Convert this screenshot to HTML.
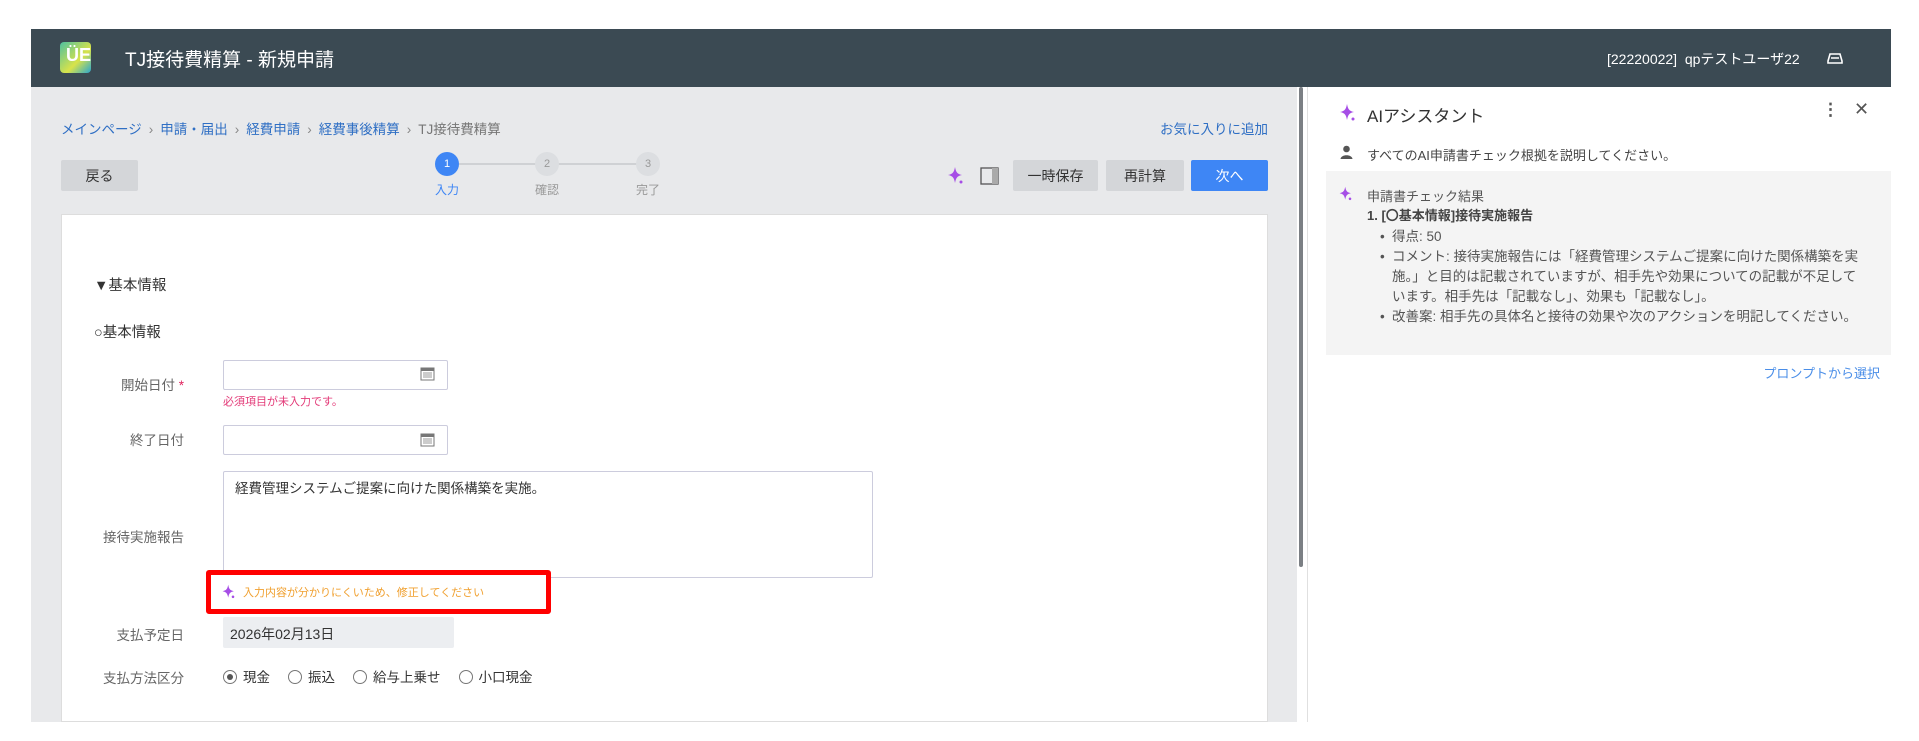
<!DOCTYPE html>
<html><head><meta charset="utf-8">
<style>
*{box-sizing:border-box;margin:0;padding:0}
body{width:1919px;height:741px;background:#fff;position:relative;overflow:hidden;font-family:"Liberation Sans","Noto Sans CJK JP",sans-serif;color:#333;font-size:13.5px}
.a{position:absolute;white-space:nowrap}
.hdr{left:31px;top:29px;width:1860px;height:58px;background:#3b4a53}
.main{left:31px;top:87px;width:1266px;height:635px;background:#e8e9eb}
.card{left:61px;top:214px;width:1207px;height:508px;background:#fff;border:1px solid #ddd}
.btn{height:31px;background:#d4d6d9;border-radius:2px;font-size:14px;color:#333;display:flex;align-items:center;justify-content:center}
.circ{width:24px;height:24px;border-radius:50%;background:#dcdee1;color:#999;font-size:11px;display:flex;align-items:center;justify-content:center}
.lbl{color:#666;text-align:right;width:140px}
.inp{border:1px solid #ccd;border-radius:2px;background:#fff}
.blue{color:#2f6fc4}
.sep{color:#888;margin:0 7px}
.rad{display:inline-block;width:14px;height:14px;border:1px solid #777;border-radius:50%;vertical-align:-2px;margin-right:6px;position:relative}
.ri{margin-right:18px}
.li{padding-left:12px;position:relative}
.li span{position:absolute;left:0}
</style></head><body>
<div class="a hdr"></div>
<div class="a" style="left:60px;top:42px;width:31px;height:31px;border-radius:4px;background:linear-gradient(135deg,#4fc0a0,#d8e34a 60%,#2aa6d0);"></div>
<div class="a" style="left:66px;top:45px;color:#fff;font-weight:bold;font-size:18px">ÜE</div>
<div class="a" style="left:125px;top:45px;color:#fff;font-size:19px">TJ接待費精算 - 新規申請</div>
<div class="a" style="left:1607px;top:49px;color:#fff;font-size:14px">[22220022]&nbsp; qpテストユーザ22</div>
<svg class="a" style="left:1826px;top:49px" width="18" height="16" viewBox="0 0 18 16"><path d="M2 12 L4 5 H14 L16 12 V14 H2Z M5 9 H13" fill="none" stroke="#fff" stroke-width="1.6"/></svg>

<div class="a main"></div>
<div class="a" style="left:1299px;top:87px;width:4px;height:480px;background:#7b7f84;border-radius:2px"></div>
<div class="a" style="left:61px;top:118px;font-size:13.5px"><span class="blue">メインページ</span><span class="sep">›</span><span class="blue">申請・届出</span><span class="sep">›</span><span class="blue">経費申請</span><span class="sep">›</span><span class="blue">経費事後精算</span><span class="sep">›</span><span style="color:#777">TJ接待費精算</span></div>
<div class="a blue" style="left:1160px;top:118px;width:108px;text-align:right">お気に入りに追加</div>
<div class="a btn" style="left:61px;top:160px;width:77px">戻る</div>
<div class="a" style="left:459px;top:163px;width:200px;height:2px;background:#cfd1d4"></div>
<div class="a circ" style="left:435px;top:152px;background:#3e86f5;color:#fff">1</div>
<div class="a circ" style="left:535px;top:152px">2</div>
<div class="a circ" style="left:636px;top:152px">3</div>
<div class="a" style="left:435px;top:181px;font-size:12px;color:#3e86f5">入力</div>
<div class="a" style="left:535px;top:181px;font-size:12px;color:#999">確認</div>
<div class="a" style="left:636px;top:181px;font-size:12px;color:#999">完了</div>
<svg class="a" style="left:946px;top:166px" width="20" height="20" viewBox="0 0 20 20"><path d="M9 1 C10 6 11 8 16 9 C11 10 10 12 9 17 C8 12 7 10 2 9 C7 8 8 6 9 1Z" fill="#a64de6"/><circle cx="15" cy="16" r="1.5" fill="#a64de6"/></svg>
<svg class="a" style="left:980px;top:167px" width="19" height="18" viewBox="0 0 19 18"><rect x="1" y="1" width="17" height="16" fill="none" stroke="#555" stroke-width="1.3"/><rect x="12" y="1" width="6" height="16" fill="#aaa"/></svg>
<div class="a btn" style="left:1013px;top:160px;width:85px">一時保存</div>
<div class="a btn" style="left:1106px;top:160px;width:78px">再計算</div>
<div class="a btn" style="left:1191px;top:160px;width:77px;background:#3e86f5;color:#fff">次へ</div>

<div class="a card"></div>
<div class="a" style="left:94px;top:274px;font-size:14.5px">▼基本情報</div>
<div class="a" style="left:94px;top:321px;font-size:14.5px">○基本情報</div>
<div class="a lbl" style="left:44px;top:374px">開始日付 <span style="color:#e0245e">*</span></div>
<div class="a inp" style="left:223px;top:360px;width:225px;height:30px"></div>
<div class="a" style="left:223px;top:393px;font-size:11px;color:#e33a78">必須項目が未入力です。</div>
<div class="a lbl" style="left:44px;top:429px">終了日付</div>
<div class="a inp" style="left:223px;top:425px;width:225px;height:30px"></div>
<svg class="a" style="left:420px;top:366px" width="15" height="15" viewBox="0 0 15 15"><rect x="1" y="2" width="13" height="12" fill="none" stroke="#777"/><rect x="1" y="2" width="13" height="3" fill="#777"/><path d="M3 7h9M3 9h9M3 11h9" stroke="#999"/></svg>
<svg class="a" style="left:420px;top:432px" width="15" height="15" viewBox="0 0 15 15"><rect x="1" y="2" width="13" height="12" fill="none" stroke="#777"/><rect x="1" y="2" width="13" height="3" fill="#777"/><path d="M3 7h9M3 9h9M3 11h9" stroke="#999"/></svg>
<div class="a inp" style="left:223px;top:471px;width:650px;height:107px"></div>
<div class="a" style="left:235px;top:477px">経費管理システムご提案に向けた関係構築を実施。</div>
<div class="a lbl" style="left:44px;top:526px">接待実施報告</div>
<div class="a" style="left:206px;top:570px;width:345px;height:44px;border:5px solid #f00;border-radius:3px;background:#fff"></div>
<svg class="a" style="left:221px;top:584px" width="16" height="16" viewBox="0 0 20 20"><path d="M9 1 C10 6 11 8 16 9 C11 10 10 12 9 17 C8 12 7 10 2 9 C7 8 8 6 9 1Z" fill="#a64de6"/><circle cx="15" cy="16" r="1.6" fill="#a64de6"/></svg>
<div class="a" style="left:243px;top:584px;font-size:11px;color:#f0a030">入力内容が分かりにくいため、修正してください</div>
<div class="a lbl" style="left:44px;top:624px">支払予定日</div>
<div class="a" style="left:223px;top:617px;width:231px;height:31px;background:#eceef1;border-radius:2px"></div>
<div class="a" style="left:230px;top:624px;font-size:14px">2026年02月13日</div>
<div class="a lbl" style="left:44px;top:667px">支払方法区分</div>
<div class="a" style="left:223px;top:666px"><span class="rad"><span style="position:absolute;left:3px;top:3px;width:6px;height:6px;border-radius:50%;background:#555"></span></span><span class="ri">現金</span><span class="rad"></span><span class="ri">振込</span><span class="rad"></span><span class="ri">給与上乗せ</span><span class="rad"></span>小口現金</div>

<div class="a" style="left:1307px;top:87px;width:584px;height:635px;background:#fff;border-left:1px solid #e0e0e0"></div>
<svg class="a" style="left:1338px;top:103px" width="20" height="20" viewBox="0 0 20 20"><path d="M9 1 C10 6 11 8 16 9 C11 10 10 12 9 17 C8 12 7 10 2 9 C7 8 8 6 9 1Z" fill="#a64de6"/><circle cx="15" cy="16" r="1.5" fill="#a64de6"/></svg>
<div class="a" style="left:1367px;top:102px;font-size:17px">AIアシスタント</div>
<div class="a" style="left:1822px;top:100px;font-size:17px;color:#555;font-weight:bold">⋮</div>
<div class="a" style="left:1854px;top:99px;font-size:18px;color:#555">✕</div>
<svg class="a" style="left:1340px;top:145px" width="13" height="14" viewBox="0 0 13 14"><circle cx="6.5" cy="4" r="3.3" fill="#555"/><path d="M0.5 14 C1 9 12 9 12.5 14Z" fill="#555"/></svg>
<div class="a" style="left:1367px;top:145px;font-size:13px;color:#444">すべてのAI申請書チェック根拠を説明してください。</div>
<div class="a" style="left:1326px;top:171px;width:565px;height:184px;background:#f4f4f4"></div>
<svg class="a" style="left:1338px;top:186px" width="16" height="16" viewBox="0 0 20 20"><path d="M9 1 C10 6 11 8 16 9 C11 10 10 12 9 17 C8 12 7 10 2 9 C7 8 8 6 9 1Z" fill="#a64de6"/><circle cx="15" cy="16" r="1.6" fill="#a64de6"/></svg>
<div class="a" style="left:1367px;top:186px;font-size:13px;color:#555">申請書チェック結果</div>
<div class="a" style="left:1367px;top:205px;font-size:13px;font-weight:bold;color:#444">1. [〇基本情報]接待実施報告</div>
<div class="a" style="left:1380px;top:227px;font-size:13.5px;color:#555;line-height:20px">
<div class="li"><span>•</span>得点: 50</div>
<div class="li"><span>•</span>コメント: 接待実施報告には「経費管理システムご提案に向けた関係構築を実<br>施。」と目的は記載されていますが、相手先や効果についての記載が不足して<br>います。相手先は「記載なし」、効果も「記載なし」。</div>
<div class="li"><span>•</span>改善案: 相手先の具体名と接待の効果や次のアクションを明記してください。</div>
</div>
<div class="a blue" style="left:1700px;top:363px;width:180px;text-align:right;font-size:13px;color:#4a8ee8">プロンプトから選択</div>
</body></html>
